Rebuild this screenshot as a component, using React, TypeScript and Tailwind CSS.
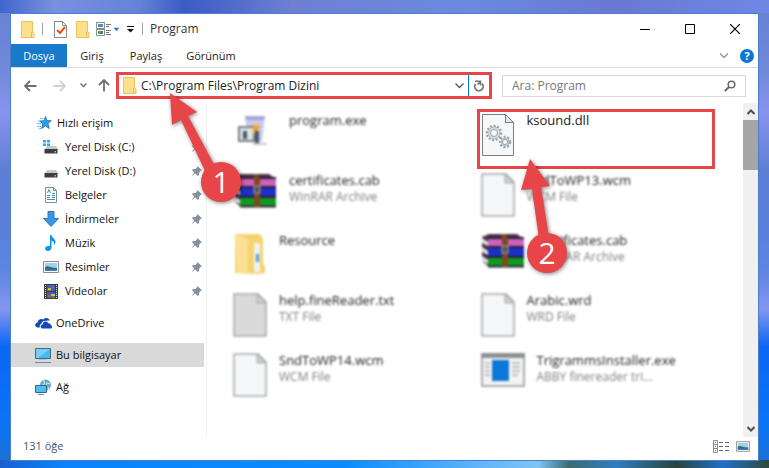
import type { ReactNode } from 'react';

type Pos = { icon: ReactNode; label: string };

function Folder() {
    return (
        <svg width="14" height="17" viewBox="0 0 14 17">
            <path d="M.5.5h11v10.500l1.500 1v4.500H.5z" fill="#fde08c" stroke="#e8c35c" />
            <path d="M10.500 11v5" stroke="#e6bd4e" />
        </svg>
    );
}

function CheckDoc() {
    return (
        <svg width="13" height="17" viewBox="0 0 13 17">
            <path d="M.5.5h8l4 4v12H.5z" fill="#fff" stroke="#8a8a8a" />
            <path d="M8.500.5v4h4" fill="none" stroke="#8a8a8a" />
            <path d="M3 9l3 3 5-6" fill="none" stroke="#e8501e" strokeWidth="2" />
        </svg>
    );
}

function ViewList() {
    return (
        <svg width="24" height="15" viewBox="0 0 24 15">
            <path d="M.5.5h8v6h-8zM.5 7.500h8v6h-8z" fill="#fff" stroke="#8a8a8a" />
            <path d="M2 2h5v3H2z" fill="#4a90d0" />
            <path d="M2 9h3v3H2z" fill="#55a040" />
            <path d="M5 9h2v3H5z" fill="#3a6fd0" />
            <path d="M10 2.500h5M10 4.500h3M10 8.500h5M10 10.500h3M10 12.500h5" stroke="#777" />
            <path d="M18 6h5l-2.500 3z" fill="#4a78b8" stroke="#4a78b8" strokeWidth=".6" />
        </svg>
    );
}

function Star() {
    return (
        <svg width="15" height="16" viewBox="0 0 15 16">
            <path d="M8.500 1.500l1.500 4 4.300.2-3.300 2.800 1.400 5L8.500 11l-4 2.500 1.300-4.500-3-3 4.200-.3z" fill="#2f9be6" stroke="#1b74c0" strokeWidth=".8" />
            <path d="M3 3.500h3M1 6h3M0 8.500h4M0 11.500h4M2 13.500h2" stroke="#4fb0f0" strokeWidth=".8" />
        </svg>
    );
}

function Drive({ system }: { system?: boolean }) {
    return (
        <svg width="16" height="16" viewBox="0 0 16 16">
            <path d="M4 7h9l2.500 3.500h-14z" fill="#c9c9c9" />
            <path d="M1.500 10h13v4.500h-13z" fill="#3d3d3d" />
            <path d="M11.500 12H13v1.500h-1.500z" fill="#6de06a" />
            {system && <path d="M0 1h3v2.500H0zM4 1h3v2.500H4zM0 4.500h3V7H0zM4 4.500h3V7H4z" fill="#1ab0f0" />}
        </svg>
    );
}

function Documents() {
    return (
        <svg width="14" height="16" viewBox="0 0 14 16">
            <path d="M1.500.5h8l3 3v12h-11z" fill="#fff" stroke="#848c94" />
            <path d="M9.500.5v3h3" fill="none" stroke="#848c94" />
            <path d="M3.500 6L5 2.500 6.500 6M3 8.500h3M3 10.500h3M3 12.500h8M8 6.500h3M8 8.500h3M8 10.500h3" fill="none" stroke="#3e8ec4" />
        </svg>
    );
}

function Download() {
    return (
        <svg width="16" height="16" viewBox="0 0 16 16">
            <path d="M5 .5h6v7h4.500L8 15.500.5 7.500H5z" fill="#3a95e4" stroke="#2a78c4" />
        </svg>
    );
}

function Music() {
    return (
        <svg width="16" height="16" viewBox="0 0 16 16">
            <path d="M7 0h1.500c.5 3 4.500 4 4 7.500-.2 1-.8 1.800-1.500 2.500.6-2.500-.5-3.800-2.500-4.500v7.300C8.500 14.800 6.800 16 5 16s-3-1-3-2.400C2 12 3.600 11 5.300 11c.7 0 1.200.1 1.700.3z" fill="#0d94f0" />
        </svg>
    );
}

function Picture({ small }: { small?: boolean }) {
    return (
        <svg width={small ? 14 : 16} height={small ? 11 : 12} viewBox="0 0 16 12">
            <path d="M.5.5h15v11H.5z" fill="#fff" stroke="#8c8c8c" />
            <path d="M2 2h12v8H2z" fill="#9fd2f2" />
            <path d="M2 6c3-2 5 1 12 1v3H2z" fill="#2f6f74" />
            <path d="M2 8.500h12V10H2z" fill="#3e7fc0" />
        </svg>
    );
}

function Video() {
    return (
        <svg width="14" height="15" viewBox="0 0 14 15">
            <path d="M0 0h14v15H0z" fill="#3a3a3a" />
            <path d="M1.500 1v14M12.500 1v14" stroke="#e8e8e8" strokeDasharray="1 1" />
            <path d="M3 1h8v6H3zM3 8h8v6H3z" fill="#3c62c4" />
            <path d="M4 4h3v3H4zM7 10h4v2H7z" fill="#e8b53a" />
            <path d="M7 2h3v2H7zM4 11h3v2H4z" fill="#c2513a" />
            <path d="M3 6h4v1H3zM8 13h3v1H8z" fill="#59a350" />
        </svg>
    );
}

function OneDrive() {
    return (
        <svg width="17" height="16" viewBox="0 0 17 16">
            <path d="M5 12.500H3c-1.700 0-2.800-1-2.800-2.500S1.300 7.600 2.700 7.500C2.800 5.200 4.500 4 6.300 4c.8 0 1.400.2 2 .6C9 3.600 10 3 11.300 3c1.800 0 3 1.100 3.300 2.700-1-.4-2.200-.3-3.100.2-2.700-.8-4.900.7-5.300 3C4.800 9.200 4.300 11 5 12.500z" fill="#0f49b5" />
            <path d="M8 13.500c-1.500 0-2.400-1-2.400-2.100s.9-2 2.100-2C7.700 7.700 9 6.500 10.500 6.500c1.300 0 2.200.7 2.700 1.700 1.600-.2 2.600.8 2.600 2.100 1 .2 1.200 1 1.200 1.600 0 1-.8 1.600-1.700 1.600z" fill="#0f49b5" />
        </svg>
    );
}

function Computer() {
    return (
        <svg width="17" height="16" viewBox="0 0 17 16">
            <path d="M.5 1.500h15v10H.5z" fill="#47baf6" stroke="#45687d" />
            <path d="M1 2h14L3 11H1z" fill="#79cffa" />
            <path d="M4 12.500h8" stroke="#b8c4cc" />
            <path d="M0 15.500h16" stroke="#6a8aa8" />
        </svg>
    );
}

function Network() {
    return (
        <svg width="17" height="17" viewBox="0 0 17 17">
            <circle cx="10.500" cy="6" r="5.500" fill="#6aa7c4" />
            <path d="M8 1.500c2 .5 2 3 0 4.500l3 1 1-3 3 1M13 8l1 3" fill="none" stroke="#c6e2ec" strokeWidth="1.200" />
            <path d="M.5 6.500h11v7H.5z" fill="#50bdf7" stroke="#35698a" />
            <path d="M3 15.500h6" stroke="#7d98a8" />
        </svg>
    );
}

function Pin() {
    return (
        <svg width="11" height="11" viewBox="0 0 11 11" className="mr-1 ml-auto">
            <path d="M6.500 0L11 4.500 9.500 5 8 7v2L6.800 10 4.300 7.500.5 10.500l3-3.900L1 4.200 2 3h2.200L6 1.500z" fill="#84909c" />
        </svg>
    );
}

function Page({ grey }: { grey?: boolean }) {
    return (
        <svg width="34" height="44" viewBox="0 0 34 44">
            <path d="M1 1h24l8 8v34H1z" fill={grey ? '#d9dad9' : '#f5f7f9'} stroke="#a5a8a9" strokeWidth="1.500" />
            <path d="M24 1v9h9z" fill="#ccd0d2" stroke="#a5a8a9" />
        </svg>
    );
}

function Gear({ x, y, r }: { x: number; y: number; r: number }) {
    return (
        <g transform={`translate(${x} ${y})`}>
            <circle r={r} fill="none" stroke="#9aa6ae" strokeWidth="2.500" strokeDasharray="2 1.600" />
            <circle r={r - 1} fill="#d6dde1" stroke="#a3afb6" strokeWidth=".8" />
            <circle r={r / 2} fill="#f7f8f9" stroke="#96a3ab" />
        </g>
    );
}

function DllPage() {
    return (
        <svg width="34" height="44" viewBox="0 0 34 44">
            <path d="M1.500 1.500h23l8 8v33h-31z" fill="#f6f7f8" stroke="#7d7d7d" />
            <path d="M24.500 1.500v8h8z" fill="#e4e7e9" stroke="#7d7d7d" />
            <Gear x={13} y={20} r={7} />
            <Gear x={24} y={29} r={5} />
        </svg>
    );
}

function Archive() {
    return (
        <svg width="44" height="36" viewBox="0 0 44 36">
            <path d="M1 4L8 1h28l7 5v28H8l-7-6z" fill="#4b3048" />
            <path d="M7 5h36v9H7z" fill="#cc62bc" />
            <path d="M7 14h36v10H7z" fill="#1c2fc8" />
            <path d="M7 24h36v9H7z" fill="#129a1e" />
            <path d="M1 5l6 4v4l-6-3zM1 14l6 4v4l-6-3zM1 23l6 4v4l-6-3z" fill="#dfe4e8" />
            <path d="M7 5h36M7 14h36M7 24h36M7 33.500h36" stroke="#2b2038" strokeWidth="2" />
            <path d="M20 1h5l2 5v28h-6V6z" fill="#7a4a20" />
            <path d="M21 13h6v7h-6z" fill="#5a5058" stroke="#b0a898" />
        </svg>
    );
}

function Resource() {
    return (
        <svg width="34" height="42" viewBox="0 0 34 42">
            <path d="M2 1h25l3 5v24l2 4v6l-8 1-22-1z" fill="#f5d26c" />
            <path d="M2 1l13 5v35L4 40z" fill="#fbe096" />
            <path d="M21 10h6v29h-6z" fill="#eef3f6" />
            <path d="M23 21h3v8h-3z" fill="#4f9ed0" />
        </svg>
    );
}

function Installer() {
    return (
        <svg width="36" height="34" viewBox="0 0 36 34">
            <path d="M12 3h20l-3 26H15z" fill="#c9caea" />
            <path d="M12 3h20l-1 4H13z" fill="#a3a5da" />
            <path d="M6 14h15v14H6z" fill="#dbe4e0" stroke="#7a7f88" strokeWidth="2" />
            <path d="M20 12h7l-3 9h-4z" fill="#eea52c" />
            <path d="M22 18h4v12h-4zM10 18h4v8h-4z" fill="#4c5668" />
            <path d="M20 31h14" stroke="#c4c8cc" strokeWidth="2" />
        </svg>
    );
}

function AppWindow() {
    return (
        <svg width="44" height="34" viewBox="0 0 44 34">
            <path d="M1 1h42v32H1z" fill="#f4f4f4" stroke="#a8acae" strokeWidth="2" />
            <path d="M0 0h44v5H0z" fill="#8c9192" />
            <path d="M11 7h17v21H11z" fill="#0b78d8" />
            <path d="M4 10h5M4 14h5M4 18h5M4 22h5M31 10h8M31 14h8M31 18h8M31 22h6" stroke="#c0c0c0" strokeWidth="2" />
        </svg>
    );
}

const quickAccess: Pos[] = [
    { icon: <Drive system />, label: 'Yerel Disk (C:)' },
    { icon: <Drive />, label: 'Yerel Disk (D:)' },
    { icon: <Documents />, label: 'Belgeler' },
    { icon: <Download />, label: 'İndirmeler' },
    { icon: <Music />, label: 'Müzik' },
    { icon: <Picture />, label: 'Resimler' },
    { icon: <Video />, label: 'Videolar' },
];

const places: (Pos & { active?: boolean })[] = [
    { icon: <OneDrive />, label: 'OneDrive' },
    { icon: <Computer />, label: 'Bu bilgisayar', active: true },
    { icon: <Network />, label: 'Ağ' },
];

type FileItem = { icon: ReactNode; name: string; type?: string; wide?: boolean; selected?: boolean };

const files: FileItem[] = [
    { icon: <Installer />, name: 'program.exe', wide: true },
    { icon: <DllPage />, name: 'ksound.dll', selected: true },
    { icon: <Archive />, name: 'certificates.cab', type: 'WinRAR Archive', wide: true },
    { icon: <Page />, name: 'SndToWP13.wcm', type: 'WCM File' },
    { icon: <Resource />, name: 'Resource' },
    { icon: <Archive />, name: 'certificates.cab', type: 'WinRAR Archive', wide: true },
    { icon: <Page grey />, name: 'help.fineReader.txt', type: 'TXT File' },
    { icon: <Page />, name: 'Arabic.wrd', type: 'WRD File' },
    { icon: <Page />, name: 'SndToWP14.wcm', type: 'WCM File' },
    { icon: <AppWindow />, name: 'TrigrammsInstaller.exe', type: 'ABBY finereader tri...', wide: true },
];

function TitleBar() {
    return (
        <header className="flex h-[30px] items-center pl-[10px]">
            <Folder />
            <div className="ml-[7px] h-3 w-px bg-gray-400" />
            <div className="ml-[11px] flex items-center gap-[9px]">
                <CheckDoc />
                <Folder />
            </div>
            <div className="ml-[6px] flex items-center gap-[7px]">
                <ViewList />
                <svg width="7" height="7" viewBox="0 0 7 7">
                    <path d="M0 .5h7" stroke="#111" />
                    <path d="M0 3h7L3.500 6.500z" fill="#111" />
                </svg>
                <div className="ml-px h-3 w-px bg-gray-400" />
                <h1 className="text-[12px] text-[#333]">Program</h1>
            </div>
            <div className="mr-px ml-auto flex">
                <button aria-label="Simge durumuna küçült" className="flex h-7 w-[45px] items-center justify-center">
                    <svg width="10" height="10"><path d="M0 5.500h10" stroke="#000" /></svg>
                </button>
                <button aria-label="Ekranı kapla" className="flex h-7 w-[45px] items-center justify-center">
                    <svg width="10" height="10"><path d="M.5.5h9v9h-9z" fill="none" stroke="#000" /></svg>
                </button>
                <button aria-label="Kapat" className="flex h-7 w-[45px] items-center justify-center">
                    <svg width="10" height="10"><path d="M0 0l10 10M10 0L0 10" stroke="#000" strokeWidth="1.200" /></svg>
                </button>
            </div>
        </header>
    );
}

function Ribbon() {
    return (
        <nav className="flex h-6 items-stretch border-b border-[#dadbdc] text-[11px] text-[#222]">
            <button className="w-14 bg-[#1979ca] pt-px text-white">Dosya</button>
            <button className="w-[50px] pt-px">Giriş</button>
            <button className="w-[58px] pt-px">Paylaş</button>
            <button className="w-[72px] pt-px">Görünüm</button>
            <div className="ml-auto flex items-center gap-3 pr-1">
                <button aria-label="Şeridi genişlet">
                    <svg width="8" height="5"><path d="M0 .5l4 4 4-4" fill="none" stroke="#9a9a9a" strokeWidth="1.500" /></svg>
                </button>
                <button aria-label="Yardım" className="h-[14px] w-[14px] rounded-full bg-[#0b75d3] text-[11px] leading-[14px] font-bold text-white">?</button>
            </div>
        </nav>
    );
}

function AddressRow() {
    return (
        <div className="flex h-[35px] items-center pr-3 pl-[13px]">
            <button aria-label="Geri">
                <svg width="13" height="12" viewBox="0 0 13 12"><path d="M6 1L1 6l5 5M1 6h11.500" fill="none" stroke="#6e6e6e" strokeWidth="1.800" /></svg>
            </button>
            <button aria-label="İleri" className="ml-4">
                <svg width="13" height="12" viewBox="0 0 13 12"><path d="M7 1l5 5-5 5M12 6H.5" fill="none" stroke="#d2d2d2" strokeWidth="1.800" /></svg>
            </button>
            <button aria-label="Son konumlar" className="ml-[14px]">
                <svg width="7" height="5"><path d="M.5.5l3 3 3-3" fill="none" stroke="#777" strokeWidth="1.500" /></svg>
            </button>
            <button aria-label="Yukarı" className="ml-[11px]">
                <svg width="12" height="13" viewBox="0 0 12 13"><path d="M1 6l5-5 5 5M6 1v11.500" fill="none" stroke="#6e6e6e" strokeWidth="1.800" /></svg>
            </button>
            <div className="ml-[6px] flex h-[27px] min-w-0 flex-1 items-center border-[3px] border-[#e84549] pl-1">
                <Folder />
                <input aria-label="Adres" defaultValue="C:\Program Files\Program Dizini" className="ml-1 min-w-0 flex-1 text-[12px] text-[#222] outline-none" />
                <button aria-label="Önceki konumlar" className="mr-1">
                    <svg width="9" height="6"><path d="M.5.5l4 4 4-4" fill="none" stroke="#555" strokeWidth="1.300" /></svg>
                </button>
                <button aria-label="Yenile" className="flex h-full w-[21px] items-center justify-center border-l border-[#0078d7]">
                    <svg width="12" height="12" viewBox="0 0 12 12">
                        <path d="M2.500 4A4.200 4.200 0 1 0 9 3.600" fill="none" stroke="#777" strokeWidth="1.800" />
                        <path d="M2 1.300h5.500v4.200M7 2L4.500 4.500" fill="none" stroke="#777" strokeWidth="1.600" />
                    </svg>
                </button>
            </div>
            <div className="ml-[10px] flex h-[22px] w-[244px] items-center border border-[#d9d9d9] px-[9px]">
                <input aria-label="Ara" placeholder="Ara: Program" className="min-w-0 flex-1 text-[12px] outline-none placeholder:text-[#777]" />
                <svg width="12" height="12" viewBox="0 0 12 12">
                    <circle cx="7.500" cy="4.500" r="3.300" fill="none" stroke="#666" strokeWidth="1.500" />
                    <path d="M5 7L.8 11" stroke="#666" strokeWidth="2" />
                </svg>
            </div>
        </div>
    );
}

function Sidebar() {
    return (
        <aside className="w-[196px] shrink-0 border-r border-[#f2f2f2] pt-2 text-[11px] text-[#111]">
            <a href="#hizli" className="flex h-6 items-center gap-[5px] pl-[26px]">
                <Star />
                <span>Hızlı erişim</span>
            </a>
            {quickAccess.map((item) => (
                <a key={item.label} href="#yer" className="flex h-6 items-center pl-8">
                    <span className="flex w-[22px] items-center"><span className="flex w-4 justify-center">{item.icon}</span></span>
                    <span>{item.label}</span>
                    <Pin />
                </a>
            ))}
            {places.map((item) => (
                <a
                    key={item.label}
                    href="#yer"
                    className={`mt-2 mr-[2px] flex h-6 items-center pl-6 ${item.active ? 'bg-[#d9d9d9]' : ''}`}
                >
                    <span className="w-[21px]">{item.icon}</span>
                    <span>{item.label}</span>
                </a>
            ))}
        </aside>
    );
}

function FileCell({ file }: { file: FileItem }) {
    return (
        <li className="relative h-[60px] pt-1">
            <div className={`flex ${file.selected ? '' : 'blur-[1px]'}`}>
                <div className={`flex shrink-0 pt-px ${file.wide ? 'w-14' : 'w-[46px]'}`}>{file.icon}</div>
                <div className="whitespace-nowrap">
                    <p className="text-[13px] leading-4 text-[#222]">{file.name}</p>
                    {file.type && <p className="mt-px text-[12px] leading-4 text-[#808080]">{file.type}</p>}
                </div>
            </div>
            {file.selected && <div className="absolute top-px right-[15px] -left-1 h-[60px] border-[3px] border-[#e84549]" />}
        </li>
    );
}

function Scrollbar() {
    return (
        <div className="flex w-[15px] shrink-0 flex-col items-center bg-[#f0f0f0]">
            <button aria-label="Yukarı kaydır" className="flex h-[17px] items-center">
                <svg width="8" height="6"><path d="M.5 5l3.500-3.500L7.500 5" fill="none" stroke="#505050" strokeWidth="2" /></svg>
            </button>
            <div className="h-[50px] w-full bg-[#a6a6a6]" />
            <button aria-label="Aşağı kaydır" className="mt-auto flex h-[17px] items-center">
                <svg width="8" height="6"><path d="M.5 1L4 4.500 7.500 1" fill="none" stroke="#505050" strokeWidth="2" /></svg>
            </button>
        </div>
    );
}

function StatusBar() {
    return (
        <footer className="flex h-[23px] items-center gap-[7px] pr-2 pb-1 pl-3 text-[11px] text-[#40587c]">
            <span className="mr-auto">131 öğe</span>
            <button aria-label="Ayrıntılar">
                <svg width="16" height="13" viewBox="0 0 16 13">
                    <path d="M.5.5h4v12h-4zM.5 4.500h4M.5 8.500h4" fill="none" stroke="#8a8a8a" />
                    <path d="M2 2h1v1H2zM2 6h1v1H2z" fill="#4a80c0" />
                    <path d="M2 10h1v1H2z" fill="#c03030" />
                    <path d="M6 2.500h4M12 2.500h4M6 6.500h4M12 6.500h4M6 10.500h4M12 10.500h4" stroke="#666" />
                </svg>
            </button>
            <button aria-label="Büyük simgeler"><Picture small /></button>
        </footer>
    );
}

// red arrows with step numbers, drawn over the window
function Callouts() {
    return (
        <div className="pointer-events-none absolute inset-0 text-[30px] text-white">
            <svg width="100%" height="100%" className="absolute inset-0 overflow-visible drop-shadow-[1px_1px_2px_rgba(0,0,0,0.5)]">
                <g fill="#e84549">
                    <path d="M159 79l27 19-9 4 28 52-10 5-25-53-9 5z" />
                    <circle cx="210" cy="168" r="20" />
                    <path d="M519 145l20 27-9 1 8 50-10 2-7-50-11 1z" />
                    <circle cx="536" cy="239" r="20" />
                </g>
            </svg>
            <span className="absolute top-[148px] left-[190px] w-10 text-center leading-10">1</span>
            <span className="absolute top-[219px] left-[516px] w-10 text-center leading-10">2</span>
        </div>
    );
}

export default function App() {
    return (
        <div className="flex min-h-screen bg-[linear-gradient(90deg,#3f66cc_0%,#7a90e0_7%,#6483d8_18%,#3a5cc4_24%,#6f7fd2_38%,#6a8ae0_60%,#6a78d4_80%,#6d88e4_100%),linear-gradient(90deg,#1a5fd0_0%,#0a82fa_8%,#0a8cff_45%,#5fb4f8_62%,#7fc4f4_70%,#3f6a6c_74%,#2f7fc0_80%,#2b4438_88%,#1f70c8_94%,#33483a_100%),linear-gradient(180deg,#6680d4_0%,#7089d8_15%,#8894ee_24%,#5f7fd6_36%,#5a80dc_50%,#5f86e2_58%,#8496f0_66%,#0b66f4_74%,#0a74f8_90%,#1f70d0_100%)] bg-[length:100%_13px,100%_8px,100%_100%] bg-[position:top,bottom,center] bg-no-repeat px-[10px] pt-[13px] pb-[7px] font-['Open_Sans',sans-serif]">
            <div className="relative flex flex-1 flex-col border border-[#4a80c8] bg-white">
                <TitleBar />
                <Ribbon />
                <AddressRow />
                <div className="flex flex-1">
                    <Sidebar />
                    <ul className="grid min-w-0 flex-1 grid-cols-[249fr_251fr] content-start pt-[5px] pr-[13px] pl-[26px]">
                        {files.map((file, i) => (
                            <FileCell key={i} file={file} />
                        ))}
                    </ul>
                    <Scrollbar />
                </div>
                <StatusBar />
                <Callouts />
            </div>
        </div>
    );
}
